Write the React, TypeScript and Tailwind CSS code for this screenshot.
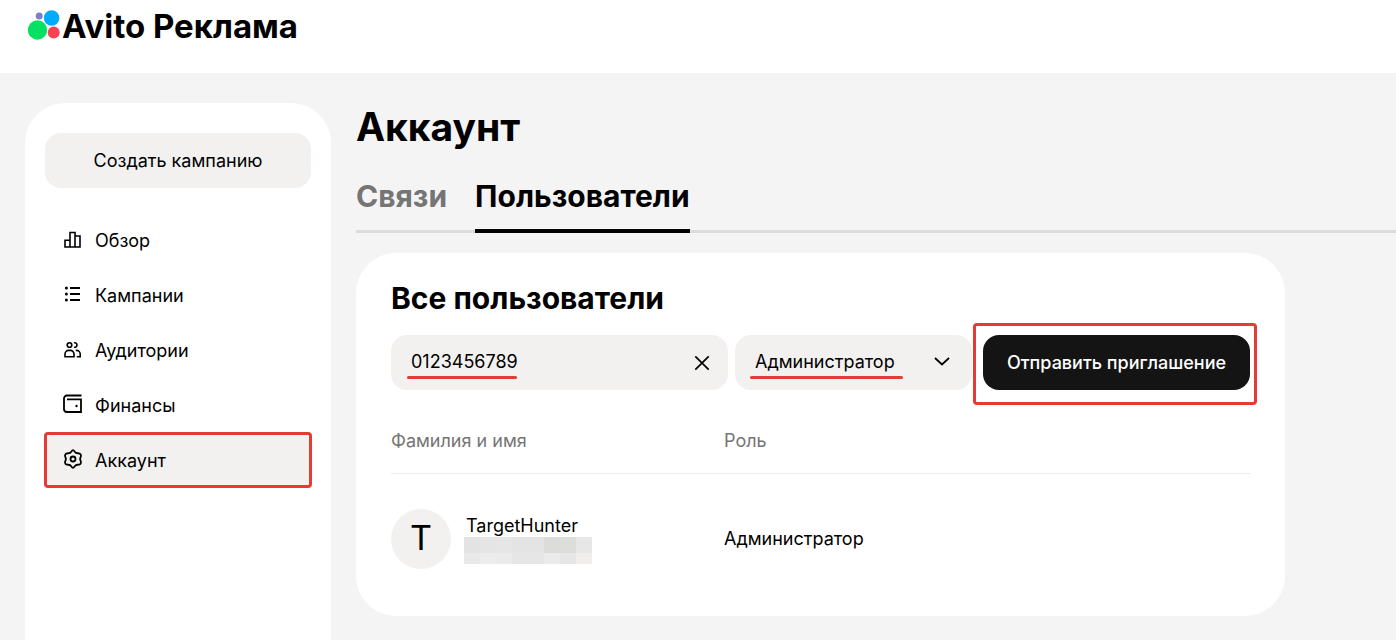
import type { ReactNode } from "react";

function Icon({ children }: { children: ReactNode }) {
  return (
    <svg
      viewBox="0 0 20 20"
      className="mb-1 size-5 shrink-0"
      fill="none"
      stroke="currentColor"
      strokeWidth="1.8"
      aria-hidden="true"
    >
      {children}
    </svg>
  );
}

const navItems = [
  {
    label: "Обзор",
    active: false,
    icon: (
      <Icon>
        <path d="M2 11.300h5V18H2zM7 18V3.500h5V18zM12 7h5v11h-5z" strokeWidth="1.600" />
      </Icon>
    ),
  },
  {
    label: "Кампании",
    active: false,
    icon: (
      <Icon>
        <path d="M7 4h10M7 10h10M7 16h10" />
        <g fill="currentColor" stroke="none">
          <circle cx="3.4" cy="4" r="1.5" />
          <circle cx="3.4" cy="10" r="1.5" />
          <circle cx="3.4" cy="16" r="1.5" />
        </g>
      </Icon>
    ),
  },
  {
    label: "Аудитории",
    active: false,
    icon: (
      <Icon>
        <g strokeWidth="1.600">
          <circle cx="6.500" cy="6" r="2.300" />
          <path d="M2 17.700V15a3.600 3.600 0 0 1 3.600-3.600h1.800A3.600 3.600 0 0 1 11 15v2.700z" />
          <path d="M11 3.800a2.300 2.300 0 1 1 0 4.400M12.800 11.400h.8a3.600 3.600 0 0 1 3.600 3.600v2.700h-3.400" />
        </g>
      </Icon>
    ),
  },
  {
    label: "Финансы",
    active: false,
    icon: (
      <Icon>
        <path d="M18.500 1.500H4A3 3 0 0 0 1 4.500V15a3 3 0 0 0 3 3h14V5.300H4" />
        <circle cx="13.500" cy="12" r="1.200" fill="currentColor" stroke="none" />
      </Icon>
    ),
  },
  {
    label: "Аккаунт",
    active: true,
    icon: (
      <Icon>
        <path
          strokeLinejoin="round"
          d="M10 1.200C11.300 1.200 11.600 3.200 13 3.900C14.400 4.600 16.600 3.700 17.600 5.300C18.900 7.200 17.100 8 17.100 10C17.100 12 18.900 12.800 17.600 14.700C16.600 16.300 14.400 15.400 13 16.100C11.600 16.800 11.300 18.800 10 18.800C8.700 18.800 8.400 16.800 7 16.100C5.600 15.400 3.400 16.300 2.400 14.700C1.100 12.800 2.900 12 2.900 10C2.900 8 1.100 7.200 2.400 5.300C3.400 3.700 5.600 4.600 7 3.900C8.400 3.200 8.700 1.200 10 1.200Z"
        />
        <circle cx="10" cy="10" r="2.500" />
      </Icon>
    ),
  },
];

function Sidebar() {
  return (
    <aside className="w-[306px] shrink-0 rounded-t-[40px] bg-white px-5 pt-[30px]">
      <button type="button" className="h-[55px] w-full rounded-2xl bg-[#f2f1f0] text-lg">
        Создать кампанию
      </button>
      <nav className="mt-[25px]">
        {navItems.map((item) => (
          <a
            key={item.label}
            href="#"
            aria-current={item.active ? "page" : undefined}
            className={
              item.active
                ? "relative flex h-[55px] items-center gap-3 rounded-xl bg-[#f2f1f0] px-[18px] text-lg"
                : "flex h-[55px] items-center gap-3 px-[18px] text-lg"
            }
          >
            {item.icon}
            {item.label}
            {item.active && (
              <span className="absolute -inset-x-px -top-px bottom-0 rounded border-3 border-[#e63b32]" />
            )}
          </a>
        ))}
      </nav>
    </aside>
  );
}

function InviteForm() {
  return (
    <form className="mt-[17px] flex" onSubmit={(e) => e.preventDefault()}>
      <div className="relative flex h-[55px] min-w-0 flex-1 items-center rounded-2xl bg-[#f2f1f0] px-5">
        <input
          type="text"
          aria-label="Номер"
          defaultValue="0123456789"
          className="min-w-0 flex-1 bg-transparent pb-0.5 text-lg outline-none"
        />
        <button type="button" aria-label="Очистить" className="-mr-1">
          <svg viewBox="0 0 20 20" className="size-5" fill="none" stroke="currentColor" strokeWidth="1.700">
            <path d="M3.300 3.300l13.400 13.400M16.700 3.300L3.300 16.700" />
          </svg>
        </button>
        <span className="absolute bottom-[11px] left-4 h-[3px] w-[110px] rounded-full bg-[#e63b32]" />
      </div>
      <div className="relative ml-[7px] h-[55px] w-[237px] shrink-0 rounded-2xl bg-[#f2f1f0]">
        <select
          aria-label="Роль"
          className="h-full w-full appearance-none bg-transparent px-5 pb-0.5 text-lg outline-none"
        >
          <option>Администратор</option>
        </select>
        <svg
          viewBox="0 0 20 20"
          className="pointer-events-none absolute top-[17px] right-5 size-5"
          fill="none"
          stroke="currentColor"
          strokeWidth="1.800"
        >
          <path d="M3 6l7 6.500L17 6" />
        </svg>
        <span className="absolute bottom-[11px] left-[15px] h-[3px] w-[153px] rounded-full bg-[#e63b32]" />
      </div>
      <div className="relative ml-[11px] shrink-0">
        <button
          type="submit"
          className="h-[55px] w-[267px] rounded-2xl bg-[#141414] text-lg font-medium text-white"
        >
          Отправить приглашение
        </button>
        <span className="pointer-events-none absolute -top-3 -right-[7px] -bottom-[15px] -left-[10px] rounded border-3 border-[#e63b32]" />
      </div>
    </form>
  );
}

function HiddenText() {
  return (
    <div className="grid w-32 grid-cols-8 grid-rows-[16px_11px]">
      <i className="bg-[#e3e3e3]" />
      <i className="bg-[#e6e5e5]" />
      <i className="bg-[#e7e6e6]" />
      <i className="bg-[#e4e4e4]" />
      <i className="bg-[#e4e4e4]" />
      <i className="bg-[#dcdcda]" />
      <i className="bg-[#dddddc]" />
      <i className="bg-[#e7e7e7]" />
      <i className="bg-[#e9e9e9]" />
      <i className="bg-[#ececec]" />
      <i className="bg-[#ebebeb]" />
      <i className="bg-[#e6e6e6]" />
      <i className="bg-[#e6e6e6]" />
      <i className="bg-[#ebebeb]" />
      <i className="bg-[#e6e6e6]" />
      <i className="bg-[#efeeed]" />
    </div>
  );
}

function UsersTable() {
  return (
    <table className="mt-6 w-full table-fixed text-left text-lg">
      <thead>
        <tr className="h-[59px] border-b border-[#ebebeb] text-[#757575]">
          <th className="w-[333px] pb-1 font-normal">Фамилия и имя</th>
          <th className="pb-1 font-normal">Роль</th>
        </tr>
      </thead>
      <tbody>
        <tr className="h-[131px]">
          <td>
            <div className="flex items-center">
              <span className="flex size-[60px] items-center justify-center rounded-full bg-[#f2f1f0] text-[34px]">
                T
              </span>
              <div className="ml-[13px]">
                <div className="pt-0.5 pl-0.5 leading-[22px]">TargetHunter</div>
                <HiddenText />
              </div>
            </div>
          </td>
          <td>Администратор</td>
        </tr>
      </tbody>
    </table>
  );
}

export default function App() {
  return (
    <div className="flex h-screen flex-col overflow-hidden bg-[#f4f4f4] font-['Inter','Noto_Sans',sans-serif] text-black">
      <header className="h-[73px] shrink-0 bg-white px-7 pt-1.5">
        <a href="#" className="flex items-center">
          <svg viewBox="0 0 34 34" className="size-[34px] shrink-0" aria-hidden="true">
            <circle cx="9.500" cy="21" r="9.700" fill="#04e061" />
            <circle cx="23.600" cy="9" r="7.800" fill="#00aaff" />
            <circle cx="25.700" cy="23.500" r="6" fill="#ff4053" />
            <circle cx="11.200" cy="7" r="3.500" fill="#7b80c4" />
          </svg>
          <span className="text-[33px] leading-10 font-bold">Avito Реклама</span>
        </a>
      </header>
      <div className="flex min-h-0 flex-1 gap-[25px] pt-[30px] pl-[25px]">
        <Sidebar />
        <main className="min-w-0 flex-1">
          <h1 className="text-[39px] leading-[48px] font-bold">Аккаунт</h1>
          <div className="relative mt-6 flex h-[58px] gap-7 text-[30px] leading-[42px] font-bold">
            <span className="absolute inset-x-0 bottom-0 h-[3px] bg-[#dcdcdc]" />
            <a href="#" className="text-[#757575]">
              Связи
            </a>
            <a href="#" aria-current="page" className="relative border-b-4 border-black">
              Пользователи
            </a>
          </div>
          <section className="mt-5 mr-[111px] rounded-[40px] bg-white px-[35px] pt-[25px] pb-3">
            <h2 className="text-[30px] leading-10 font-bold">Все пользователи</h2>
            <InviteForm />
            <UsersTable />
          </section>
        </main>
      </div>
    </div>
  );
}
